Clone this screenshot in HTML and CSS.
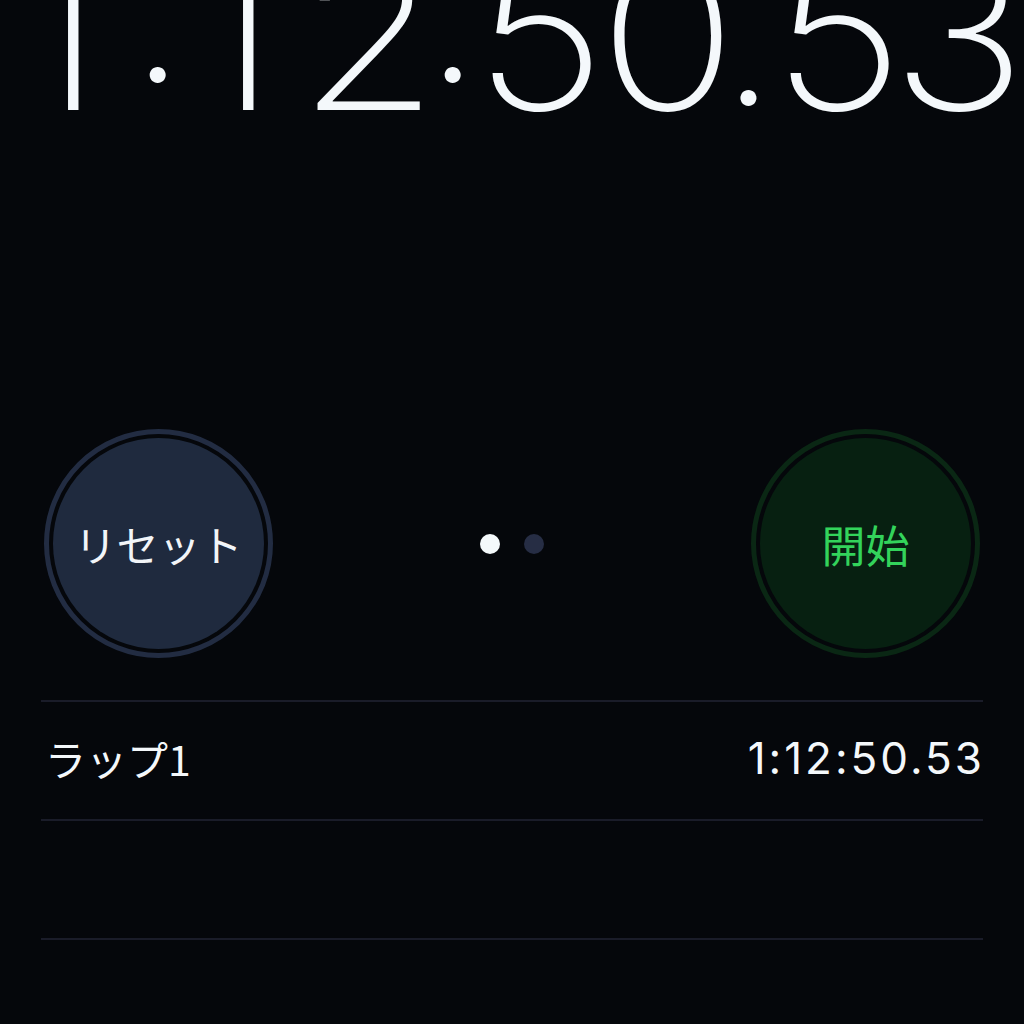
FILE: index.html
```html
<!DOCTYPE html>
<html lang="ja">
<head>
<meta charset="utf-8">
<title>ストップウォッチ</title>
<link rel="stylesheet" href="styles.css">
</head>
<body>
<main class="stopwatch">
  <div class="time" aria-label="1:12:50.53">
    <span class="ch digit one">1</span><span class="ch colon">:</span><span class="ch digit one">1</span><span class="ch digit">2</span><span class="ch colon">:</span><span class="ch digit">5</span><span class="ch digit zero">0</span><span class="ch period">.</span><span class="ch digit">5</span><span class="ch digit">3</span>
  </div>
  <div class="controls">
    <button class="btn btn-reset"><span>リセット</span></button>
    <div class="pager">
      <span class="dot dot-active"></span>
      <span class="dot"></span>
    </div>
    <button class="btn btn-start"><span>開始</span></button>
  </div>
  <ul class="laps">
    <li class="lap"><span class="lap-name">ラップ1</span><span class="lap-time">1:12:50.53</span></li>
    <li class="lap"></li>
  </ul>
</main>
</body>
</html>
```

FILE: styles.css
```css
html, body {
  margin: 0;
  padding: 0;
  background: #05070b;
  height: 100%;
  overflow: hidden;
}

.stopwatch {
  font-family: "Inter", "Noto Sans CJK JP", sans-serif;
  color: #f4f8fb;
}

.time {
  font-family: "Inter", "Roboto", sans-serif;
  font-weight: 200;
  font-size: 204px;
  line-height: 204px;
  height: 204px;
  margin-top: -66px;
  padding-left: 3px;
  display: flex;
  justify-content: center;
  white-space: nowrap;
}

.ch {
  display: block;
  text-align: center;
  flex: none;
}

.digit {
  width: 120px;
  transform: scaleX(1.12);
}

.digit.one {
  transform: translateX(-11px) scaleX(1.12);
}

.digit.zero {
  transform: translateX(6px) scaleX(1.12);
}

.colon {
  width: 55px;
  transform: translateY(-28px);
}

.period {
  width: 58px;
  transform: translateY(-5px);
}

.controls {
  margin-top: 291px;
  padding: 0 44px;
  display: flex;
  align-items: center;
  justify-content: space-between;
}

.btn {
  box-sizing: border-box;
  width: 229px;
  height: 229px;
  border-radius: 50%;
  padding: 4px;
  background-clip: content-box;
  display: flex;
  align-items: center;
  justify-content: center;
  font-family: "Noto Sans CJK JP", sans-serif;
  font-size: 42px;
  cursor: pointer;
}

.btn-reset {
  border: 5px solid #222c42;
  background-color: #1f2a3e;
  color: #f2f5f8;
}

.btn-start {
  border: 5px solid #0a2714;
  background-color: #072011;
  color: #33d35b;
  font-size: 44px;
}

.pager {
  display: flex;
  gap: 24px;
  align-items: center;
}

.dot {
  width: 20px;
  height: 20px;
  border-radius: 50%;
  background: #262d44;
}

.dot-active {
  background: #f4f9fb;
}

.laps {
  list-style: none;
  margin: 42px 41px 0;
  padding: 0;
  border-top: 2px solid #1a1c29;
}

.lap {
  box-sizing: border-box;
  height: 119px;
  border-bottom: 2px solid #1a1c29;
  display: flex;
  align-items: center;
  justify-content: space-between;
  padding: 0 1px 6px 4px;
}

.lap-name {
  font-family: "Noto Sans CJK JP", sans-serif;
  font-size: 41px;
}

.lap-time {
  font-family: "Inter", "Roboto", sans-serif;
  font-size: 44px;
  font-weight: 400;
  letter-spacing: 3px;
  margin-right: -3px;
}
```
